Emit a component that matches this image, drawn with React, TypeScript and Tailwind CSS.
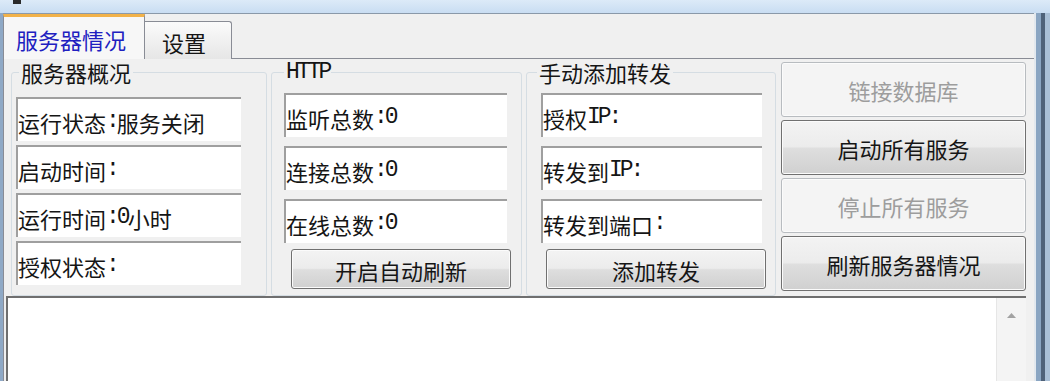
import React from "react";

const sans = "font-['Noto_Sans_CJK_SC',sans-serif]";

function Rich({ text }: { text: string }) {
  const parts = text.split(/([\x00-\x7F]+)/).filter((p) => p.length > 0);
  return (
    <>
      {parts.map((p, i) =>
        /^[\x00-\x7F]+$/.test(p) ? (
          <span key={i} className="font-['Liberation_Mono',monospace] text-[23px] tracking-[-3px]">
            {p}
          </span>
        ) : (
          <span key={i}>{p}</span>
        )
      )}
    </>
  );
}

function Box({ text }: { text: string }) {
  return (
    <div className="h-[44px] bg-white border-t-2 border-l-2 border-[#9f9f9f] flex items-center pt-[3px] text-[22px] leading-none text-[#151515] whitespace-nowrap overflow-hidden">
      <Rich text={text} />
    </div>
  );
}

function Btn({ text, disabled = false, className = "" }: { text: string; disabled?: boolean; className?: string }) {
  return (
    <div
      className={`flex items-center justify-center rounded-[3px] border text-[22px] leading-none whitespace-nowrap ${
        disabled
          ? "border-[#b8bcc0] bg-[#f4f4f4] text-[#9d9d9d] shadow-[inset_0_0_0_1px_#fbfbfb]"
          : "border-[#707070] text-[#151515] bg-[linear-gradient(to_bottom,#f3f3f3_0%,#ececec_48%,#dedede_52%,#d0d0d0_100%)] shadow-[inset_0_0_0_1px_#fbfbfb]"
      } ${className}`}
    >
      {text}
    </div>
  );
}

export default function App() {
  return (
    <div className={`w-[1050px] h-[381px] overflow-hidden flex flex-col bg-[#c3d8ee] ${sans}`}>
      {/* title bar */}
      <div className="relative h-[13px] shrink-0 bg-[linear-gradient(to_bottom,#dceaf8,#c9ddf2)]">
        <div className="absolute left-[13px] top-0 w-[8px] h-[4px] bg-[#2a2a2a]" />
      </div>
      <div className="flex flex-1 min-h-0">
        {/* left frame */}
        <div className="w-[3px] shrink-0 bg-[#8fa9c6]" />
        {/* client area */}
        <div className="w-[1031px] shrink-0 flex flex-col bg-[#f0f0f0] border-t border-[#8a99a9]">
          {/* tab strip */}
          <div className="h-[45px] shrink-0 flex items-end">
            <div className="w-[142px] h-[45px] bg-[#f7f7f7] border-l border-r border-[#898c95] border-t-[3px] border-t-[#f2b24a] flex items-center pl-[12px] pt-[2px] text-[22px] leading-none text-[#2020c0]">
              服务器情况
            </div>
            <div className="w-[87px] h-[38px] rounded-tr-[3px] border-t border-r border-[#898c95] bg-[linear-gradient(to_bottom,#fbfbfb,#e6e6e6)] flex items-center pl-[17px] pt-[2px] text-[22px] leading-none text-[#151515]">
              设置
            </div>
            <div className="flex-1 h-[1px] bg-[#898c95]" />
          </div>
          {/* panel */}
          <div className="flex-1 min-h-0 flex flex-col border-l border-[#898c95]">
            <div className="h-[237px] shrink-0 flex pl-[7px] pt-[3px] gap-[4px]">
              {/* group 1 */}
              <fieldset className="w-[256px] h-[234px] border border-[#d5dde3] rounded-[3px] pl-[4px] pt-[15px]">
                <legend className="ml-[3px] px-[2px] text-[22px] leading-[20px] text-[#151515]">服务器概况</legend>
                <div className="flex flex-col gap-[4px] w-[225px]">
                  <Box text="运行状态:服务关闭" />
                  <Box text="启动时间:" />
                  <Box text="运行时间:0小时" />
                  <Box text="授权状态:" />
                </div>
              </fieldset>
              {/* group 2 */}
              <fieldset className="w-[251px] h-[234px] border border-[#d5dde3] rounded-[3px] pl-[12px] pt-[11px]">
                <legend className="ml-0 px-[2px] font-['Liberation_Mono',monospace] text-[23px] tracking-[-3px] leading-[20px] text-[#151515]">
                  HTTP
                </legend>
                <div className="flex flex-col gap-[9px] w-[223px]">
                  <Box text="监听总数:0" />
                  <Box text="连接总数:0" />
                  <Box text="在线总数:0" />
                </div>
                <Btn text="开启自动刷新" className="mt-[6px] ml-[7px] w-[220px] h-[40px] pt-[2px]" />
              </fieldset>
              {/* group 3 */}
              <fieldset className="w-[250px] h-[234px] border border-[#d5dde3] rounded-[3px] pl-[14px] pt-[11px]">
                <legend className="-ml-[4px] px-[2px] text-[22px] leading-[20px] text-[#151515]">手动添加转发</legend>
                <div className="flex flex-col gap-[9px] w-[221px]">
                  <Box text="授权IP:" />
                  <Box text="转发到IP:" />
                  <Box text="转发到端口:" />
                </div>
                <Btn text="添加转发" className="mt-[6px] ml-[5px] w-[220px] h-[40px] pt-[2px]" />
              </fieldset>
              {/* buttons */}
              <div className="ml-[1px] w-[245px] flex flex-col gap-[3px]">
                <Btn text="链接数据库" disabled className="h-[55px]" />
                <Btn text="启动所有服务" className="h-[55px]" />
                <Btn text="停止所有服务" disabled className="h-[55px]" />
                <Btn text="刷新服务器情况" className="h-[55px]" />
              </div>
            </div>
            {/* text area */}
            <div className="flex-1 min-h-0 ml-[2px] mr-[8px] bg-white border-t-2 border-l-2 border-[#6f6f6f] flex justify-end">
              <div className="w-[30px] bg-[#f4f4f4] border-l border-[#e6e6e6] flex justify-center pt-[15px]">
                <svg width="9" height="5" viewBox="0 0 9 5">
                  <polygon points="0,5 9,5 4.5,0" fill="#a2a2a2" />
                </svg>
              </div>
            </div>
          </div>
        </div>
        {/* right frame */}
        <div className="w-[2px] shrink-0 bg-[#e2e8ee]" />
        <div className="w-[5px] shrink-0 bg-[#8aa5c2]" />
        <div className="w-[4px] shrink-0 bg-[#4f6279]" />
        <div className="flex-1 bg-[#a9bfd6]" />
      </div>
    </div>
  );
}
